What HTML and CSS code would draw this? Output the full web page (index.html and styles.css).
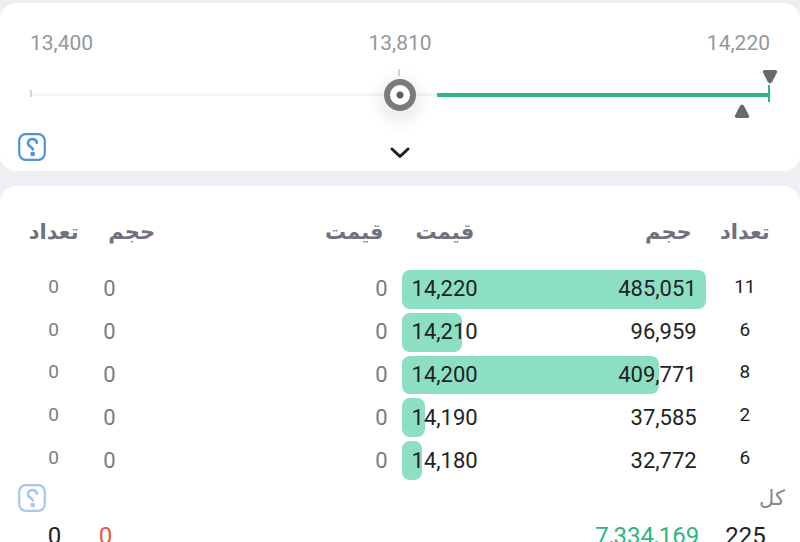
FILE: index.html
```html
<!DOCTYPE html>
<html lang="fa">
<head>
<meta charset="utf-8">
<meta name="viewport" content="width=device-width, initial-scale=1">
<title>عمق بازار</title>
<link rel="stylesheet" href="styles.css">
</head>
<body>
<svg class="defs" aria-hidden="true">
  <symbol id="help" viewBox="0 0 28 28">
    <rect x="1.2" y="1.2" width="25.6" height="25.6" rx="6.5" fill="none" stroke="currentColor" stroke-width="2.2"/>
    <path d="M19 9.6C18.3 7 16.5 6 14.4 6C11.8 6 10 7.700 10 10C10 12.200 11.300 13 12.700 14C14 15 14.800 15.500 14.900 16.500" fill="none" stroke="currentColor" stroke-width="2.700" stroke-linecap="round"/>
    <rect x="12.500" y="19" width="4.400" height="4" rx="1" fill="currentColor"/>
  </symbol>
</svg>
<main>
  <section class="card range-card">
    <div class="limits"><span>13,400</span><span>13,810</span><span>14,220</span></div>
    <div class="range">
      <i class="track"></i>
      <i class="tick tick-start"></i>
      <i class="tick tick-middle"></i>
      <i class="gain"></i>
      <i class="tick-end"></i>
      <svg class="marker marker-high" viewBox="0 0 16 16"><path d="M2.500 1H13.500Q16 1.300 14.800 3.800L10.400 12.600Q8 16.200 5.600 12.600L1.200 3.800Q0 1.300 2.500 1Z"/></svg>
      <svg class="marker marker-low" viewBox="0 0 16 16"><path d="M2.500 15H13.500Q16 14.700 14.800 12.200L10.400 3.400Q8-.2 5.600 3.400L1.200 12.200Q0 14.700 2.500 15Z"/></svg>
      <input class="slider" type="range" min="13400" max="14220" value="13810" aria-label="قیمت">
    </div>
    <div class="actions">
      <button class="icon-button" type="button" aria-label="راهنما"><svg class="help"><use href="#help"/></svg></button>
      <button class="icon-button" type="button" aria-label="بیشتر"><svg class="chevron" viewBox="0 0 20 12"><path d="M2 2L10 9.500L18 2"/></svg></button>
    </div>
  </section>

  <section class="card">
    <table class="book">
      <colgroup><col class="col-count"><col><col><col class="col-bid"><col class="col-bid"><col class="col-count"></colgroup>
      <thead>
        <tr><th class="count ask">تعداد</th><th class="ask-volume">حجم</th><th class="ask-price">قیمت</th><th class="bid-price">قیمت</th><th class="bid-volume">حجم</th><th class="count">تعداد</th></tr>
      </thead>
      <tbody>
        <tr><td class="count ask">0</td><td class="ask-volume ask">0</td><td class="ask-price ask">0</td><td class="bid-price"><i class="bar" style="width:200%"></i>14,220</td><td class="bid-volume">485,051</td><td class="count">11</td></tr>
        <tr><td class="count ask">0</td><td class="ask-volume ask">0</td><td class="ask-price ask">0</td><td class="bid-price"><i class="bar" style="width:40%"></i>14,210</td><td class="bid-volume">96,959</td><td class="count">6</td></tr>
        <tr><td class="count ask">0</td><td class="ask-volume ask">0</td><td class="ask-price ask">0</td><td class="bid-price"><i class="bar" style="width:169%"></i>14,200</td><td class="bid-volume">409,771</td><td class="count">8</td></tr>
        <tr><td class="count ask">0</td><td class="ask-volume ask">0</td><td class="ask-price ask">0</td><td class="bid-price"><i class="bar" style="width:15.5%"></i>14,190</td><td class="bid-volume">37,585</td><td class="count">2</td></tr>
        <tr><td class="count ask">0</td><td class="ask-volume ask">0</td><td class="ask-price ask">0</td><td class="bid-price"><i class="bar" style="width:13.5%"></i>14,180</td><td class="bid-volume">32,772</td><td class="count">6</td></tr>
      </tbody>
    </table>
    <div class="total-head">
      <button class="icon-button" type="button" aria-label="راهنمای کل"><svg class="help faded"><use href="#help"/></svg></button>
      <span class="total-label">کل</span>
    </div>
    <div class="totals">
      <span class="total-count">0</span><span class="total-ask">0</span><span class="total-bid">7,334,169</span><span class="total-count">225</span>
    </div>
  </section>
</main>
</body>
</html>
```
FILE: styles.css
```css
* { box-sizing: border-box; }

body {
  margin: 0;
  background: #eeeff3;
  color: #222226;
  font-family: Roboto, "DejaVu Sans", sans-serif;
  overflow: hidden;
}

main {
  display: flex;
  flex-direction: column;
  gap: 15px;
  padding-top: 3px;
}

.defs { position: absolute; width: 0; height: 0; }

.card {
  background: #fff;
  border-radius: 16px;
}

.range-card { padding: 28px 30px 10px; }

.limits {
  display: flex;
  justify-content: space-between;
  color: #96979d;
  font-size: 21px;
  line-height: 24px;
}

.range {
  position: relative;
  height: 78px;
}

.range i, .marker { position: absolute; }

.track { left: 0; right: 0; top: 38px; height: 3px; background: #f5f5f6; }
.tick { width: 2px; height: 7px; background: #d4d5d8; }
.tick-start { left: 0; top: 35px; }
.tick-middle { left: calc(50% - 2px); top: 14px; }
.gain { left: 55%; right: 0; top: 38px; height: 4px; background: #2fb587; }
.tick-end { right: 0; top: 30px; width: 2px; height: 17px; background: #2fb587; }

.marker { width: 16px; height: 16px; fill: #68686f; }
.marker-high { right: -8px; top: 14px; }
.marker-low { right: 20px; top: 48px; }

.slider {
  appearance: none;
  position: absolute;
  left: 0;
  top: 24px;
  width: 100%;
  height: 32px;
  margin: 0;
  background: transparent;
}

.slider::-webkit-slider-thumb {
  appearance: none;
  width: 32px;
  height: 32px;
  border: 6px solid #7b7b7c;
  border-radius: 50%;
  background: radial-gradient(circle, #606062 3px, #fff 4px);
  box-shadow: 0 6px 18px 4px rgba(0, 0, 0, .09);
}

.actions {
  display: grid;
  grid-template-columns: 1fr auto 1fr;
  align-items: center;
  margin: 0 -12px;
}

.icon-button {
  display: flex;
  justify-self: start;
  padding: 0;
  border: 0;
  background: none;
  color: #5193dd;
}

.help { width: 28px; height: 28px; }
.faded { opacity: .5; }

.chevron {
  width: 20px;
  height: 12px;
  margin-top: 12px;
  fill: none;
  stroke: #1d1d1f;
  stroke-width: 3;
  stroke-linecap: round;
  stroke-linejoin: round;
}

.book {
  width: calc(100% - 32px);
  height: 296px;
  margin: 0 16px;
  border-collapse: collapse;
  table-layout: fixed;
  isolation: isolate;
}

.col-count { width: 10.2%; }
.col-bid { width: 19.8%; }

.book th {
  height: 82px;
  padding-top: 10px;
  padding-bottom: 0;
  color: #70717c;
  font-family: "DejaVu Sans", sans-serif;
  font-size: 21px;
  font-weight: 700;
}

.book td {
  padding-top: 0;
  padding-bottom: 0;
  font-size: 22px;
  line-height: 24px;
}

.book .count { padding-left: 0; padding-right: 0; text-align: center; }
.book .count.ask { padding-right: 3px; }
.book td.count { padding-bottom: 5px; font-size: 19px; }
.book td.ask { color: #7c7c80; }
.ask-volume { padding: 0 9px; text-align: left; }
.ask-price { padding: 0 14px; text-align: right; }
.bid-price { position: relative; padding: 0 10px; text-align: left; }
.bid-volume { padding: 0 9px; text-align: right; }
th.ask-volume, th.bid-volume, th.bid-price { padding-left: 14px; padding-right: 14px; }
th.ask-price { padding-right: 18px; }

.bar {
  position: absolute;
  z-index: -1;
  left: 0;
  top: 2px;
  bottom: 2px;
  border-radius: 8px;
  background: #8cdfc2;
}

.total-head {
  display: flex;
  justify-content: space-between;
  align-items: center;
  padding: 0 15px 0 18px;
  height: 32px;
}

.total-label {
  color: #88888c;
  font-family: "DejaVu Sans", sans-serif;
  font-size: 21px;
}

.totals {
  display: grid;
  grid-template-columns: 10% 1fr 1fr 10%;
  padding: 6px 16px;
  font-size: 24px;
  line-height: 32px;
}

.total-count { text-align: center; }
.total-ask { padding-left: 6px; color: #df5b50; }
.total-bid { padding-right: 8px; color: #2fb587; text-align: right; }
```
